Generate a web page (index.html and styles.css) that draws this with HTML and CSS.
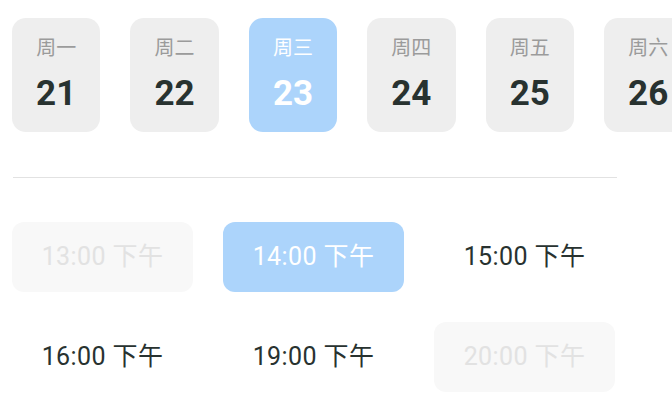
FILE: index.html
```html
<!DOCTYPE html>
<html lang="zh">
<head>
<meta charset="utf-8">
<link rel="stylesheet" href="styles.css">
</head>
<body>
<div class="page">
  <div class="days">
    <div class="day"><span class="wd">周一</span><span class="num">21</span></div>
    <div class="day"><span class="wd">周二</span><span class="num">22</span></div>
    <div class="day active"><span class="wd">周三</span><span class="num">23</span></div>
    <div class="day"><span class="wd">周四</span><span class="num">24</span></div>
    <div class="day"><span class="wd">周五</span><span class="num">25</span></div>
    <div class="day"><span class="wd">周六</span><span class="num">26</span></div>
  </div>
  <div class="divider"></div>
  <div class="slots">
    <div class="slot disabled">13:00 下午</div>
    <div class="slot selected">14:00 下午</div>
    <div class="slot">15:00 下午</div>
    <div class="slot">16:00 下午</div>
    <div class="slot">19:00 下午</div>
    <div class="slot disabled">20:00 下午</div>
  </div>
</div>
</body>
</html>
```
FILE: styles.css
```css
* { box-sizing: border-box; }
html, body { margin: 0; padding: 0; background: #ffffff; }
body {
  width: 672px;
  height: 404px;
  overflow: hidden;
  font-family: Roboto, "Noto Sans CJK SC", sans-serif;
}
.page { padding-top: 18px; }
.days {
  display: flex;
  gap: 30px;
  padding-left: 12px;
  overflow: hidden;
  width: 672px;
}
.day {
  flex: 0 0 88.4px;
  height: 114px;
  border-radius: 14px;
  background: #eeeeee;
  display: flex;
  flex-direction: column;
  align-items: center;
}
.day .wd {
  margin-top: 17px;
  font-size: 20px;
  line-height: 26px;
  color: #9b9b9b;
}
.day .num {
  margin-top: 15px;
  font-size: 35px;
  line-height: 36px;
  font-weight: 700;
  color: #283230;
}
.day.active { background: #acd4fb; }
.day.active .wd, .day.active .num { color: #ffffff; }
.divider {
  margin: 45px 0 0 13px;
  width: 604px;
  height: 1px;
  background: #e2e2e2;
}
.slots {
  margin: 44px 0 0 12px;
  display: grid;
  grid-template-columns: repeat(3, 181px);
  grid-auto-rows: 70px;
  gap: 30px;
}
.slot {
  border-radius: 12px;
  display: flex;
  align-items: center;
  justify-content: center;
  padding-bottom: 0;
  font-size: 25px;
  line-height: 30px;
  letter-spacing: 0.4px;
  color: #283230;
}
.slot.disabled { background: #f8f8f8; color: #e2e2e2; }
.slot.selected { background: #acd4fb; color: #ffffff; }
```
